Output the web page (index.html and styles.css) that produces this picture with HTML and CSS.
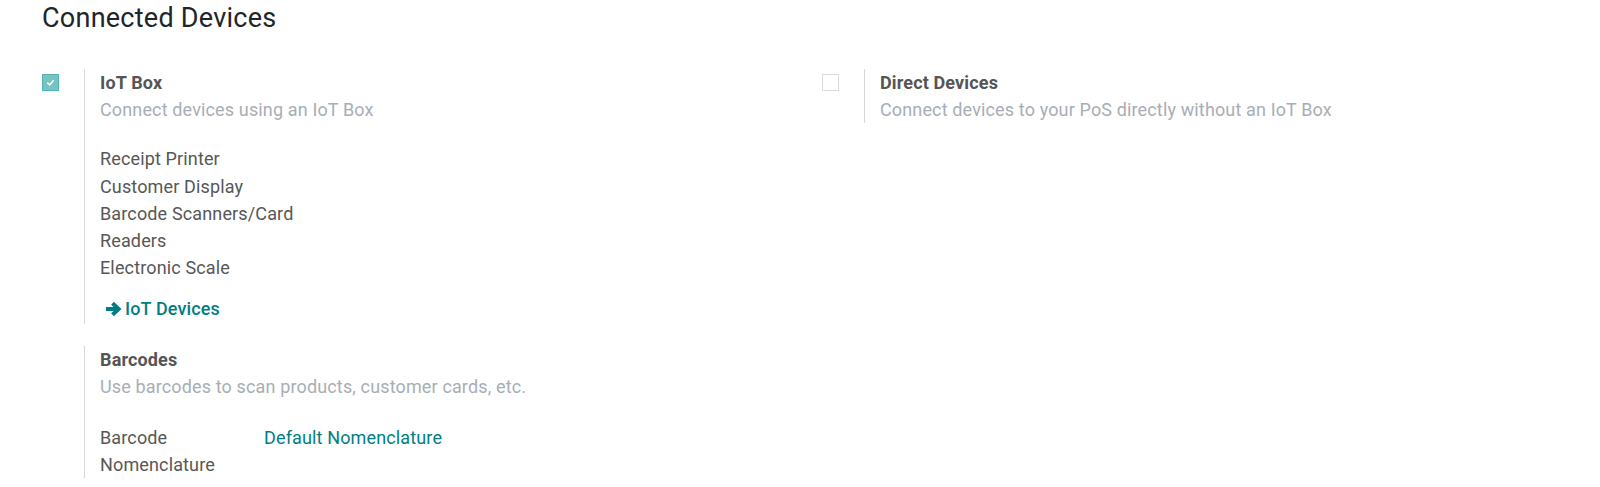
FILE: index.html
```html
<!DOCTYPE html>
<html lang="en">
<head>
<meta charset="utf-8">
<title>Connected Devices</title>
<link rel="stylesheet" href="styles.css">
</head>
<body>
<div class="settings">
  <h2 class="section-title">Connected Devices</h2>
  <div class="settings-grid">
    <div class="col">
      <div class="setting-box">
        <div class="setting-left">
          <span class="checkbox checked">
            <svg viewBox="0 0 10 10" width="9" height="9"><path d="M1.5 5.2 L4 7.5 L8.5 2.5" fill="none" stroke="#fff" stroke-width="1.8"/></svg>
          </span>
        </div>
        <div class="setting-right">
          <div class="setting-title">IoT Box</div>
          <div class="setting-desc">Connect devices using an IoT Box</div>
          <div class="device-list">
            <div class="device">Receipt Printer</div>
            <div class="device">Customer Display</div>
            <div class="device">Barcode Scanners/Card Readers</div>
            <div class="device">Electronic Scale</div>
          </div>
          <a class="link-btn" href="#">
            <svg class="arrow" viewBox="0 0 17 16" width="17" height="16"><path d="M1 8 H13" stroke="#017e84" stroke-width="4" fill="none"/><path d="M7.5 2.2 L13.6 8 L7.5 13.8" stroke="#017e84" stroke-width="4" fill="none" stroke-linejoin="miter"/></svg>
            <span>IoT Devices</span>
          </a>
        </div>
      </div>
      <div class="setting-box spaced">
        <div class="setting-left"></div>
        <div class="setting-right">
          <div class="setting-title">Barcodes</div>
          <div class="setting-desc">Use barcodes to scan products, customer cards, etc.</div>
          <div class="field-row">
            <div class="field-label">Barcode Nomenclature</div>
            <a class="field-value" href="#">Default Nomenclature</a>
          </div>
        </div>
      </div>
    </div>
    <div class="col">
      <div class="setting-box">
        <div class="setting-left">
          <span class="checkbox"></span>
        </div>
        <div class="setting-right">
          <div class="setting-title">Direct Devices</div>
          <div class="setting-desc">Connect devices to your PoS directly without an IoT Box</div>
        </div>
      </div>
    </div>
  </div>
</div>
</body>
</html>
```
FILE: styles.css
```css
* { box-sizing: border-box; }
html, body { margin: 0; padding: 0; background: #fff; }
body {
  font-family: Roboto, "Liberation Sans", sans-serif;
  font-size: 18px;
  line-height: 27.2px;
  letter-spacing: 0.14px;
  color: #575757;
}
.settings { padding-left: 42px; }
.section-title {
  margin: 0;
  font-size: 27px;
  font-weight: 400;
  line-height: 36px;
  letter-spacing: 0.25px;
  color: #212529;
}
.settings-grid {
  margin-top: 33px;
  display: grid;
  grid-template-columns: 780px 780px;
}
.setting-box { display: flex; }
.setting-box.spaced { margin-top: 22px; }
.setting-left { width: 42px; flex: none; padding-top: 5px; }
.setting-right {
  border-left: 1px solid #d5d7da;
  padding-left: 15px;
  flex: 1;
}
.checkbox {
  display: flex;
  align-items: center;
  justify-content: center;
  width: 17px;
  height: 17px;
  border: 1px solid #d9dbde;
  background: #fff;
}
.checkbox.checked {
  background: #72c5c1;
  border-color: #55b5b0;
}
.setting-title { font-weight: 700; color: #555; }
.setting-desc { color: #a8aeb5; }
.device-list { margin-top: 22px; }
.device { max-width: 215px; }
.link-btn {
  display: inline-flex;
  align-items: center;
  margin-top: 14px;
  margin-left: 5px;
  color: #017e84;
  font-weight: 500;
  text-decoration: none;
}
.link-btn .arrow { margin-right: 3px; }
.field-row {
  margin-top: 23px;
  display: grid;
  grid-template-columns: 164px 1fr;
}
.field-label { max-width: 150px; }
.field-value { color: #017e84; text-decoration: none; }
```
